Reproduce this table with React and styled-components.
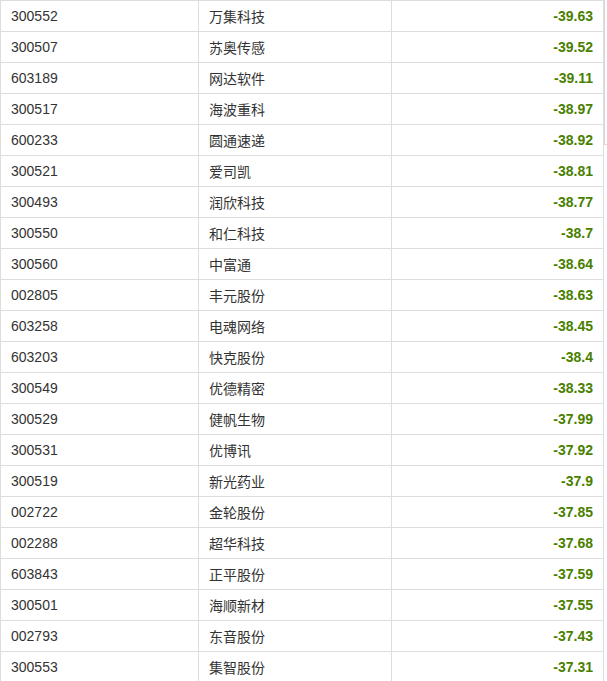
import React from "react";
import styled, { createGlobalStyle } from "styled-components";

const Global = createGlobalStyle`
  html, body { margin: 0; padding: 0; background: #fff; }
  body { font-family: "Liberation Sans", Arial, "Noto Sans CJK SC", sans-serif; overflow: hidden; }
`;

const Wrap = styled.div`
  position: relative;
  width: 607px;
  height: 681px;
  overflow: hidden;
`;

const Edge = styled.div`
  position: absolute;
  top: 0;
  left: 604px;
  width: 4px;
  height: 145px;
  border-left: 1px solid #d8d8d8;
  border-bottom: 1px solid #d8d8d8;
  box-sizing: border-box;
`;

const Table = styled.table`
  border-collapse: collapse;
  width: 603px;
  table-layout: fixed;
  font-size: 14px;
  color: #333;
`;

const Row = styled.tr`
  height: 31px;
`;

const Cell = styled.td`
  border: 1px solid #ddd;
  padding: 0 10px;
  height: 30px;
  box-sizing: border-box;
  text-align: ${(p) => (p.$right ? "right" : "left")};
  font-weight: ${(p) => (p.$bold ? "bold" : "normal")};
  color: ${(p) => (p.$green ? "#4a7f00" : "#333")};
  font-family: ${(p) =>
    p.$cjk
      ? '"Noto Sans CJK SC", "Liberation Sans", sans-serif'
      : '"Liberation Sans", Arial, sans-serif'};
  line-height: 30px;
  white-space: nowrap;
`;

const rows = [
  ["300552", "万集科技", "-39.63"],
  ["300507", "苏奥传感", "-39.52"],
  ["603189", "网达软件", "-39.11"],
  ["300517", "海波重科", "-38.97"],
  ["600233", "圆通速递", "-38.92"],
  ["300521", "爱司凯", "-38.81"],
  ["300493", "润欣科技", "-38.77"],
  ["300550", "和仁科技", "-38.7"],
  ["300560", "中富通", "-38.64"],
  ["002805", "丰元股份", "-38.63"],
  ["603258", "电魂网络", "-38.45"],
  ["603203", "快克股份", "-38.4"],
  ["300549", "优德精密", "-38.33"],
  ["300529", "健帆生物", "-37.99"],
  ["300531", "优博讯", "-37.92"],
  ["300519", "新光药业", "-37.9"],
  ["002722", "金轮股份", "-37.85"],
  ["002288", "超华科技", "-37.68"],
  ["603843", "正平股份", "-37.59"],
  ["300501", "海顺新材", "-37.55"],
  ["002793", "东音股份", "-37.43"],
  ["300553", "集智股份", "-37.31"],
];

export default function App() {
  return (
    <Wrap>
      <Global />
      <Edge />
      <Table>
        <colgroup>
          <col style={{ width: 198 }} />
          <col style={{ width: 193 }} />
          <col style={{ width: 212 }} />
        </colgroup>
        <tbody>
          {rows.map(([code, name, val]) => (
            <Row key={code}>
              <Cell>{code}</Cell>
              <Cell $cjk>{name}</Cell>
              <Cell $right $bold $green>
                {val}
              </Cell>
            </Row>
          ))}
        </tbody>
      </Table>
    </Wrap>
  );
}
